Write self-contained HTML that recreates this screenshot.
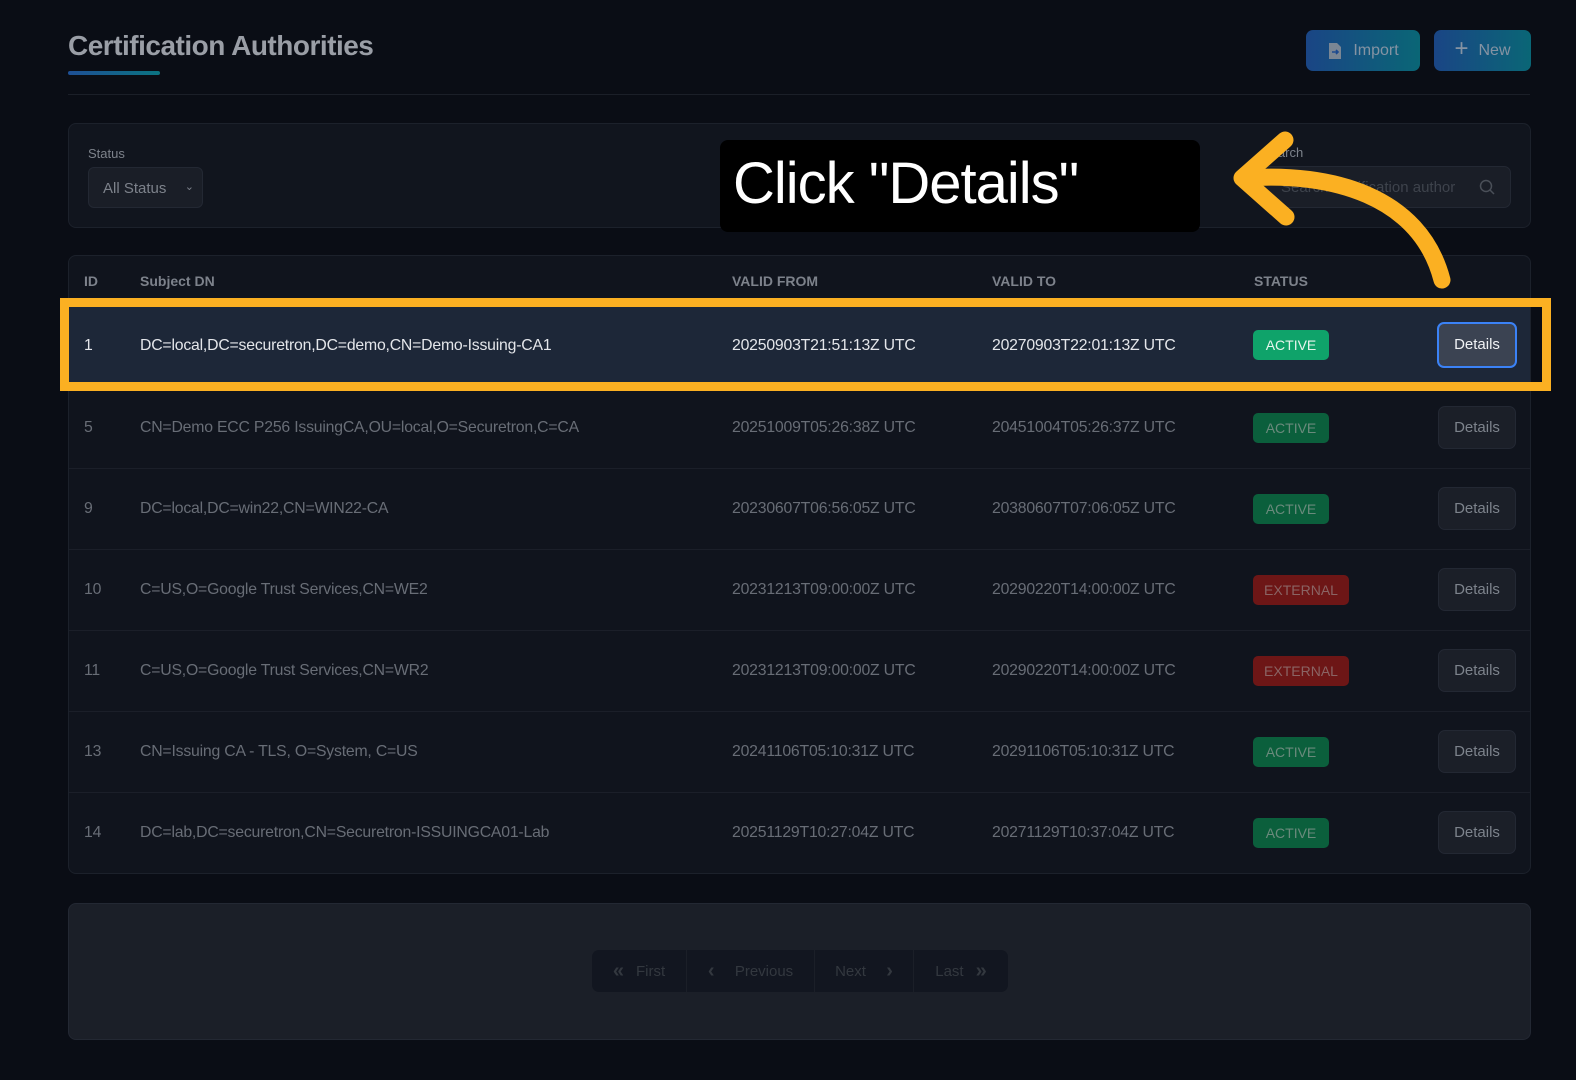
<!DOCTYPE html>
<html><head><meta charset="utf-8"><style>
*{box-sizing:border-box;margin:0;padding:0}
body{width:1576px;height:1080px;background:#0a0d15;font-family:"Liberation Sans",sans-serif;position:relative;overflow:hidden;color:#9aa0aa}
.a{position:absolute}
.title{left:68px;top:30px;font-size:28px;font-weight:bold;color:#9a9ea6;letter-spacing:-0.5px}
.uline{left:68px;top:71px;width:92px;height:4px;border-radius:2px;background:linear-gradient(90deg,#1e4f95,#0b7482)}
.hr{left:68px;top:94px;width:1462px;height:1px;background:#1b1f28}
.btn{top:30px;height:41px;border-radius:7px;background:linear-gradient(90deg,#1a4585,#0a6676);color:#8593a3;font-size:16px;display:flex;align-items:center;justify-content:center;gap:10px}
.card{background:#11151e;border:1px solid #1c212b;border-radius:8px}
.lbl{font-size:13px;color:#7d828b}
.sel{left:88px;top:167px;width:115px;height:41px;border-radius:6px;background:#1a1e27;border:1px solid #232833;color:#7d828b;font-size:15px;padding:12px 0 0 14px}
.search{left:1262px;top:166px;width:249px;height:42px;border-radius:7px;background:#1a1e27;border:1px solid #232833;color:#3e434c;font-size:15px;padding:12px 0 0 18px}
.th{top:273px;font-size:14px;font-weight:bold;color:#7d828b}
.row{left:69px;width:1461px;height:81px;border-top:1px solid #1b1f29}
.cell{position:absolute;top:0;line-height:80px;font-size:15.8px;color:#686d76;letter-spacing:-0.2px}
.badge{position:absolute;top:25px;height:30px;border-radius:5px;font-size:14px;line-height:30px;text-align:center;color:#6a8a7c}
.act{left:1184px;width:76px;background:#0b5f3c}
.ext{left:1184px;width:96px;background:#6d1616;color:#8a6464}
.det{position:absolute;left:1369px;top:18px;width:78px;height:43px;border-radius:7px;background:#1b1f28;border:1px solid #232833;color:#7d838c;font-size:15px;line-height:41px;text-align:center}
.pag{left:592px;top:950px;height:42px;border-radius:7px;background:#121620;display:flex;font-size:15px;color:#33383f}
.pag div{display:flex;align-items:center;justify-content:center;gap:12px;border-right:1px solid #1b1f28}
</style></head><body>
<div class="a title">Certification Authorities</div>
<div class="a uline"></div>
<div class="a hr"></div>
<div class="a btn" style="left:1306px;width:114px"><svg width="16" height="18" viewBox="0 0 16 18"><path d="M2 1h8l4 4v12H2z" fill="#7a8694"/><path d="M5 10h6M9 8l2 2-2 2" stroke="#1d4a8f" stroke-width="1.6" fill="none"/></svg>Import</div>
<div class="a btn" style="left:1434px;width:97px"><span style="font-size:24px;font-weight:300;margin-top:-3px">+</span>New</div>

<div class="a card" style="left:68px;top:123px;width:1463px;height:105px"></div>
<div class="a lbl" style="left:88px;top:146px">Status</div>
<div class="a sel">All Status <span style="position:absolute;right:8px;top:12px;font-size:11px">&#8964;</span></div>
<div class="a lbl" style="left:1262px;top:145px">Search</div>
<div class="a search">Search certification author<svg class="a" style="right:14px;top:12px" width="17" height="17" viewBox="0 0 17 17"><circle cx="7" cy="7" r="5.5" stroke="#4a4f58" stroke-width="1.5" fill="none"/><path d="M11 11l4 4" stroke="#4a4f58" stroke-width="1.5"/></svg></div>

<div class="a card" style="left:68px;top:255px;width:1463px;height:619px;background:#10141d"></div>
<div class="a th" style="left:84px">ID</div>
<div class="a th" style="left:140px">Subject DN</div>
<div class="a th" style="left:732px">VALID FROM</div>
<div class="a th" style="left:992px">VALID TO</div>
<div class="a th" style="left:1254px">STATUS</div>

<div class="a row" style="top:306px;background:#1d2738;border-top:none">
<div class="cell" style="left:15px;color:#e4e6ea">1</div><div class="cell" style="left:71px;color:#e4e6ea">DC=local,DC=securetron,DC=demo,CN=Demo-Issuing-CA1</div>
<div class="cell" style="left:663px;color:#e4e6ea">20250903T21:51:13Z UTC</div><div class="cell" style="left:923px;color:#e4e6ea">20270903T22:01:13Z UTC</div>
<div class="badge act" style="top:24px;background:#0fa36a;color:#e6f4ec">ACTIVE</div>
<div class="det" style="left:1368px;top:16px;width:80px;height:46px;background:#3b4352;border:2px solid #3b82f6;color:#f0f2f5">Details</div></div>

<div class="a row" style="top:387px"><div class="cell" style="left:15px">5</div><div class="cell" style="left:71px">CN=Demo ECC P256 IssuingCA,OU=local,O=Securetron,C=CA</div><div class="cell" style="left:663px">20251009T05:26:38Z UTC</div><div class="cell" style="left:923px">20451004T05:26:37Z UTC</div><div class="badge act">ACTIVE</div><div class="det">Details</div></div>
<div class="a row" style="top:468px"><div class="cell" style="left:15px">9</div><div class="cell" style="left:71px">DC=local,DC=win22,CN=WIN22-CA</div><div class="cell" style="left:663px">20230607T06:56:05Z UTC</div><div class="cell" style="left:923px">20380607T07:06:05Z UTC</div><div class="badge act">ACTIVE</div><div class="det">Details</div></div>
<div class="a row" style="top:549px"><div class="cell" style="left:15px">10</div><div class="cell" style="left:71px">C=US,O=Google Trust Services,CN=WE2</div><div class="cell" style="left:663px">20231213T09:00:00Z UTC</div><div class="cell" style="left:923px">20290220T14:00:00Z UTC</div><div class="badge ext">EXTERNAL</div><div class="det">Details</div></div>
<div class="a row" style="top:630px"><div class="cell" style="left:15px">11</div><div class="cell" style="left:71px">C=US,O=Google Trust Services,CN=WR2</div><div class="cell" style="left:663px">20231213T09:00:00Z UTC</div><div class="cell" style="left:923px">20290220T14:00:00Z UTC</div><div class="badge ext">EXTERNAL</div><div class="det">Details</div></div>
<div class="a row" style="top:711px"><div class="cell" style="left:15px">13</div><div class="cell" style="left:71px">CN=Issuing CA - TLS, O=System, C=US</div><div class="cell" style="left:663px">20241106T05:10:31Z UTC</div><div class="cell" style="left:923px">20291106T05:10:31Z UTC</div><div class="badge act">ACTIVE</div><div class="det">Details</div></div>
<div class="a row" style="top:792px"><div class="cell" style="left:15px">14</div><div class="cell" style="left:71px">DC=lab,DC=securetron,CN=Securetron-ISSUINGCA01-Lab</div><div class="cell" style="left:663px">20251129T10:27:04Z UTC</div><div class="cell" style="left:923px">20271129T10:37:04Z UTC</div><div class="badge act">ACTIVE</div><div class="det">Details</div></div>

<div class="a" style="left:60px;top:298px;width:1491px;height:93px;border:9px solid #fbb022"></div>

<div class="a card" style="left:68px;top:903px;width:1463px;height:137px;background:#1b1f28;border-color:#232833"></div>
<div class="a pag">
<div style="width:95px"><b style="font-size:20px">&#171;</b> First</div>
<div style="width:128px"><b style="font-size:20px">&#8249;</b>&nbsp; Previous</div>
<div style="width:99px">Next &nbsp;<b style="font-size:20px">&#8250;</b></div>
<div style="width:94px;border:none">Last <b style="font-size:20px">&#187;</b></div>
</div>

<div class="a" style="left:720px;top:140px;width:480px;height:92px;background:#000;border-radius:8px;color:#fff;font-size:58px;padding:10px 0 0 13px;letter-spacing:-1px">Click "Details"</div>
<svg class="a" style="left:0;top:0" width="1576" height="1080"><g fill="none" stroke="#fbb022" stroke-width="17" stroke-linecap="round" stroke-linejoin="round"><path d="M1246 178 C1330 172 1420 195 1442 280"/><path d="M1285 140 L1242 178 L1286 217"/></g></svg>
</body></html>
